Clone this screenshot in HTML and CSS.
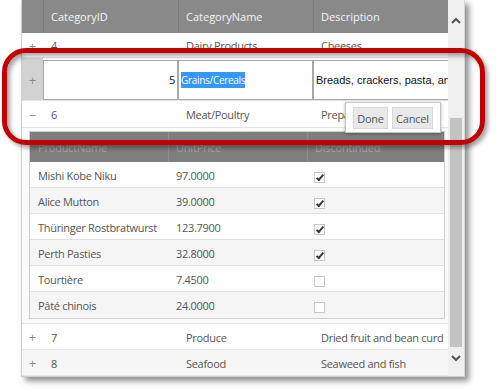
FILE: index.html
```html
<!DOCTYPE html>
<html lang="en">
<head>
    <meta charset="UTF-8">
    <title>Categories Grid - Inline Edit</title>
    <link rel="stylesheet" href="styles.css">
</head>
<body>
    <div class="page">
        <div class="grid">
            <div class="grid-body">
                <table class="master">
                    <colgroup>
                        <col class="c-expand"><col class="c-id"><col class="c-name"><col class="c-desc">
                    </colgroup>
                    <tr class="head">
                        <th class="expand"></th><th>CategoryID</th><th>CategoryName</th><th>Description</th>
                    </tr>
                    <tr class="row row-short">
                        <td class="expand">+</td><td>4</td><td>Dairy Products</td><td>Cheeses</td>
                    </tr>
                    <!-- row in edit mode -->
                    <tr class="row edit-row">
                        <td class="expand">+</td>
                        <td><div class="input num">5</div></td>
                        <td><div class="input text-sel"><span class="selected">Grains/Cereals</span></div></td>
                        <td><div class="input">Breads, crackers, pasta, and cereal</div></td>
                    </tr>
                    <tr class="row row-open">
                        <td class="expand">&minus;</td><td>6</td><td>Meat/Poultry</td><td>Prepared meats</td>
                    </tr>
                    <!-- detail rows for category 6 -->
                    <tr class="detail-row">
                        <td colspan="4" class="detail-cell">
                            <table class="products">
                                <colgroup>
                                    <col class="p-name"><col class="p-price"><col class="p-disc">
                                </colgroup>
                                <tr class="p-head"><th>ProductName</th><th>UnitPrice</th><th>Discontinued</th></tr>
                                <tr><td>Mishi Kobe Niku</td><td>97.0000</td><td><span class="check on"></span></td></tr>
                                <tr class="alt"><td>Alice Mutton</td><td>39.0000</td><td><span class="check on"></span></td></tr>
                                <tr><td>Thüringer Rostbratwurst</td><td>123.7900</td><td><span class="check on"></span></td></tr>
                                <tr class="alt"><td>Perth Pasties</td><td>32.8000</td><td><span class="check on"></span></td></tr>
                                <tr><td>Tourtière</td><td>7.4500</td><td><span class="check"></span></td></tr>
                                <tr class="alt"><td>Pâté chinois</td><td>24.0000</td><td><span class="check"></span></td></tr>
                            </table>
                        </td>
                    </tr>
                    <tr class="row">
                        <td class="expand">+</td><td>7</td><td>Produce</td><td>Dried fruit and bean curd</td>
                    </tr>
                    <tr class="row alt">
                        <td class="expand">+</td><td>8</td><td>Seafood</td><td>Seaweed and fish</td>
                    </tr>
                </table>
            </div>
            <div class="scrollbar">
                <div class="sb-arrow sb-up">
                    <svg width="10" height="7" viewBox="0 0 10 7"><polyline points="1,6 5,2 9,6" fill="none" stroke="#555" stroke-width="2"/></svg>
                </div>
                <div class="sb-track"><div class="sb-thumb"></div></div>
                <div class="sb-arrow sb-down">
                    <svg width="10" height="7" viewBox="0 0 10 7"><polyline points="1,1 5,5 9,1" fill="none" stroke="#555" stroke-width="2"/></svg>
                </div>
            </div>
        </div>

        <!-- Done / Cancel popup over the edit row -->
        <div class="edit-popup">
            <button class="btn btn-done">Done</button>
            <button class="btn btn-cancel">Cancel</button>
        </div>

        <!-- red callout drawn round the edited row -->
        <div class="callout"></div>
    </div>
</body>
</html>
```

FILE: styles.css
```css
body {
    margin: 0;
    background: #fff;
    font-family: "Open Sans", sans-serif;
    font-size: 11px;
    color: #555;
}
.page {
    position: relative;
    width: 500px;
    height: 391px;
    overflow: hidden;
}
.grid {
    display: flex;
    width: 443px;
    height: 376px;
    margin-left: 21px;
    border-left: 1px solid #cfcfcf;
    border-bottom: 1px solid #cfcfcf;
    background: #fff;
    box-shadow: 4px 4px 6px rgba(0, 0, 0, 0.45);
}
.grid-body {
    width: 427px;
    overflow: hidden;
}
table {
    border-collapse: separate;
    border-spacing: 0;
    table-layout: fixed;
}
.master {
    width: 427px;
}
.c-expand { width: 21px; }
.c-id { width: 135px; }
.c-name { width: 135px; }
.c-desc { width: 136px; }

.master th {
    height: 33px;
    padding: 0 8px;
    background: #898989;
    color: #f4f4f4;
    font-weight: normal;
    text-align: left;
    box-shadow: inset 1px 0 #7b7b7b;
}
.master th.expand {
    box-shadow: none;
}
.master td {
    height: 26px;
    padding: 0 8px;
    letter-spacing: -0.3px;
    white-space: nowrap;
    overflow: hidden;
    box-shadow: inset 0 -1px #e4e4e4;
}
.master td.expand {
    padding: 0;
    text-align: center;
    color: #8a8a8a;
    font-size: 13px;
    letter-spacing: 0;
}
.master .row-short td { height: 25px; }
.master .row-open td { height: 27px; }
.row.alt td { background: #f6f6f6; }

/* edit mode */
.master .edit-row td {
    height: 43px;
    padding: 0;
    vertical-align: top;
}
.master .edit-row td.expand {
    background: #d2d2d2;
    vertical-align: middle;
}
.input {
    box-sizing: border-box;
    height: 40px;
    margin-top: 2px;
    padding: 0 2px;
    border: 1px solid #a8a8a8;
    background: #fff;
    font-family: "Liberation Sans", Arial, sans-serif;
    font-size: 11px;
    letter-spacing: 0;
    line-height: 38px;
    color: #111;
    white-space: nowrap;
    overflow: hidden;
}
.input.num {
    text-align: right;
    font-family: "Open Sans", sans-serif;
    letter-spacing: -0.3px;
}
.input.text-sel {
    font-family: "Open Sans", sans-serif;
    font-size: 10px;
    letter-spacing: -0.3px;
}
.selected {
    background: #3399ff;
    color: #fff;
    padding: 1px 0;
}

/* detail */
.master td.detail-cell {
    height: 193px;
    padding: 3px 0 0 7px;
    vertical-align: top;
    background: #fafafa;
}
.products {
    width: 414px;
    border: 1px solid #cfcfcf;
    background: #fff;
}
.p-name { width: 138px; }
.p-price { width: 139px; }
.p-disc { width: 137px; }
.products th {
    height: 30px;
    padding: 0 8px;
    background: #7e7e7e;
    color: #a6a6a6;
    font-weight: normal;
    text-align: left;
    letter-spacing: -0.2px;
    box-shadow: inset 1px 0 #8e8e8e;
}
.products th:first-child {
    box-shadow: none;
}
.products td {
    height: 26px;
    padding: 0 8px;
    color: #555;
    box-shadow: inset 0 -1px #e0e0e0;
}
.products tr:last-child td {
    box-shadow: none;
}
.products tr.alt td {
    background: #f5f5f5;
}
.products td:last-child {
    padding-left: 7px;
}
.check {
    display: inline-block;
    box-sizing: border-box;
    width: 11px;
    height: 11px;
    margin-top: 2px;
    border: 1px solid #c8c8c8;
    background: #fff;
    position: relative;
    vertical-align: middle;
}
.check.on::after {
    content: "";
    position: absolute;
    left: 3px;
    top: 0;
    width: 2px;
    height: 6px;
    border: solid #3a3a3a;
    border-width: 0 2px 2px 0;
    transform: rotate(40deg);
}

/* scrollbar */
.scrollbar {
    display: flex;
    flex-direction: column;
    width: 16px;
    background: #f0f0f0;
    border-right: 1px solid #d8d8d8;
}
.sb-arrow {
    display: flex;
    align-items: center;
    justify-content: center;
}
.sb-up { height: 40px; }
.sb-down {
    height: 22px;
    padding-bottom: 7px;
}
.sb-track {
    flex: 1;
    padding-top: 78px;
}
.sb-thumb {
    width: 12px;
    height: 229px;
    margin-left: 2px;
    background: #c3c3c3;
}

/* popup with Done / Cancel */
.edit-popup {
    position: absolute;
    left: 345px;
    top: 102px;
    box-sizing: border-box;
    width: 96px;
    height: 31px;
    padding: 4px 0 0 7px;
    display: flex;
    gap: 4px;
    background: #fff;
    border: 1px solid #c4c4c4;
    box-shadow: 0 1px 3px rgba(0, 0, 0, 0.3);
}
.btn {
    height: 22px;
    padding: 0;
    font-family: "Open Sans", sans-serif;
    font-size: 11px;
    letter-spacing: -0.2px;
    color: #555;
    background: #e8e8e8;
    border: 1px solid #d8d8d8;
    border-radius: 0;
}
.btn-done { width: 35px; }
.btn-cancel { width: 41px; }

/* red callout round the edited row */
.callout {
    position: absolute;
    left: 2px;
    top: 48px;
    box-sizing: border-box;
    width: 483px;
    height: 97px;
    border: 5px solid #c10000;
    border-radius: 24px;
    box-shadow: 3px 3px 4px rgba(0, 0, 0, 0.35), inset 3px 3px 4px rgba(0, 0, 0, 0.35);
}
```
